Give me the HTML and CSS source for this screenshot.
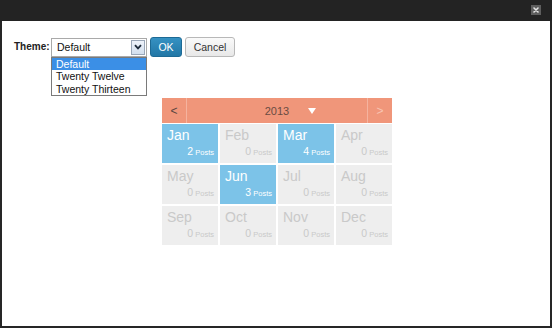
FILE: index.html
```html
<!DOCTYPE html>
<html>
<head>
<meta charset="utf-8">
<link rel="stylesheet" href="styles.css">
</head>
<body>
<div class="window">
  <div class="titlebar">
    <span class="close">
      <svg width="10" height="10" viewBox="0 0 10 10"><rect width="10" height="10" fill="#5e5e5e"/><path d="M3 3L7 7M7 3L3 7" stroke="#e6e6e6" stroke-width="1.6" stroke-linecap="round"/></svg>
    </span>
  </div>
  <div class="content">
    <div class="theme-row">
      <label class="theme-label">Theme:</label>
      <div class="select-wrap">
        <div class="select">
          <span class="select-value">Default</span>
          <span class="select-arrow">
            <svg width="8" height="6" viewBox="0 0 8 6"><path d="M1 1.2L4 4.4L7 1.2" fill="none" stroke="#1d2a3a" stroke-width="1.8"/></svg>
          </span>
        </div>
        <ul class="dropdown">
          <li class="option selected">Default</li>
          <li class="option">Twenty Twelve</li>
          <li class="option">Twenty Thirteen</li>
        </ul>
      </div>
      <button class="btn btn-ok">OK</button>
      <button class="btn btn-cancel">Cancel</button>
    </div>

    <div class="calendar">
      <div class="cal-header">
        <span class="cal-nav cal-prev">&lt;</span>
        <span class="cal-year">2013<span class="cal-caret"></span></span>
        <span class="cal-nav cal-next">&gt;</span>
      </div>
      <div class="cal-grid">
        <div class="cell active"><span class="m">Jan</span><span class="p"><b>2</b> Posts</span></div>
        <div class="cell"><span class="m">Feb</span><span class="p"><b>0</b> Posts</span></div>
        <div class="cell active"><span class="m">Mar</span><span class="p"><b>4</b> Posts</span></div>
        <div class="cell"><span class="m">Apr</span><span class="p"><b>0</b> Posts</span></div>
        <div class="cell"><span class="m">May</span><span class="p"><b>0</b> Posts</span></div>
        <div class="cell active"><span class="m">Jun</span><span class="p"><b>3</b> Posts</span></div>
        <div class="cell"><span class="m">Jul</span><span class="p"><b>0</b> Posts</span></div>
        <div class="cell"><span class="m">Aug</span><span class="p"><b>0</b> Posts</span></div>
        <div class="cell"><span class="m">Sep</span><span class="p"><b>0</b> Posts</span></div>
        <div class="cell"><span class="m">Oct</span><span class="p"><b>0</b> Posts</span></div>
        <div class="cell"><span class="m">Nov</span><span class="p"><b>0</b> Posts</span></div>
        <div class="cell"><span class="m">Dec</span><span class="p"><b>0</b> Posts</span></div>
      </div>
    </div>
  </div>
</div>
</body>
</html>
```

FILE: styles.css
```css
html, body {
  margin: 0;
  padding: 0;
  background: #fff;
}
body {
  font-family: "Liberation Sans", Arial, sans-serif;
}
.window {
  width: 552px;
  height: 328px;
  box-sizing: border-box;
  border: 2px solid #262626;
  border-top: 0;
  display: flex;
  flex-direction: column;
  background: #fff;
}
.titlebar {
  height: 21px;
  margin: 0 -2px;
  background: #232323;
  display: flex;
  justify-content: flex-end;
  align-items: flex-start;
  padding: 5px 11px 0 0;
  box-sizing: border-box;
}
.close {
  display: block;
  width: 10px;
  height: 10px;
}
.close svg { display: block; }

.content {
  flex: 1;
  padding: 16px 0 0 12px;
}
.theme-row {
  display: flex;
  align-items: center;
  height: 20px;
}
.theme-label {
  width: 37px;
  font-size: 10px;
  font-weight: bold;
  color: #222;
  line-height: 12px;
}
.select-wrap {
  position: relative;
  width: 96px;
  height: 19px;
}
.select {
  box-sizing: border-box;
  height: 19px;
  border: 1px solid #a9a9a9;
  background: #fff;
  display: flex;
  align-items: center;
  justify-content: space-between;
  padding: 0 1px 0 5px;
}
.select-value {
  font-size: 10.5px;
  color: #111;
}
.select-arrow {
  width: 14px;
  height: 15px;
  box-sizing: border-box;
  border: 1px solid #9aa7b8;
  background: linear-gradient(#eef3fa, #d3dfee);
  display: flex;
  align-items: center;
  justify-content: center;
}
.select-arrow svg { display: block; }
.dropdown {
  position: absolute;
  left: 0;
  top: 19px;
  width: 96px;
  box-sizing: border-box;
  margin: 0;
  padding: 0;
  list-style: none;
  border: 1px solid #7a7a7a;
  background: #fff;
  z-index: 2;
}
.option {
  font-size: 10.5px;
  line-height: 12.5px;
  height: 12.5px;
  padding-left: 4px;
  color: #111;
}
.option.selected {
  background: #3b8fe6;
  color: #fff;
}
.btn {
  box-sizing: border-box;
  height: 20px;
  border-radius: 3px;
  font-family: "Liberation Sans", Arial, sans-serif;
  font-size: 10.5px;
  padding: 0;
  margin-left: 3px;
}
.btn-ok {
  width: 32px;
  margin-left: 3px;
  background: linear-gradient(#3591c2, #2277a6);
  border: 1px solid #1d6a95;
  color: #fff;
}
.btn-cancel {
  width: 50px;
  background: linear-gradient(#fafafa, #e8e8e8);
  border: 1px solid #b8b8b8;
  color: #333;
}

.calendar {
  width: 230px;
  margin: 41px auto 0;
  position: relative;
  left: -5px;
}
.cal-header {
  height: 25px;
  background: #f0967a;
  display: flex;
  align-items: stretch;
}
.cal-nav {
  width: 24px;
  display: flex;
  align-items: center;
  justify-content: center;
  font-size: 12px;
}
.cal-prev {
  color: #5a4640;
  border-right: 1px solid #f5b39f;
}
.cal-next {
  color: #f8c4b2;
  border-left: 1px solid #f5b39f;
}
.cal-year {
  flex: 1;
  position: relative;
  display: flex;
  align-items: center;
  justify-content: center;
  font-size: 11px;
  color: #6a4c42;
}
.cal-caret {
  position: absolute;
  left: 50%;
  top: 10px;
  margin-left: 31px;
  width: 0;
  height: 0;
  border-left: 4px solid transparent;
  border-right: 4px solid transparent;
  border-top: 6px solid #fff;
}
.cal-grid {
  margin-top: 1px;
  display: grid;
  grid-template-columns: repeat(4, 56px);
  grid-auto-rows: 39px;
  column-gap: 2px;
  row-gap: 2px;
}
.cell {
  background: #eeeeee;
  color: #c9c9c9;
  display: flex;
  flex-direction: column;
  justify-content: space-between;
  padding: 3px 4px 5px 5px;
  box-sizing: border-box;
}
.cell.active {
  background: #7cc3e8;
  color: #fff;
}
.m {
  font-size: 14px;
  line-height: 16px;
}
.p {
  text-align: right;
  font-size: 7.5px;
  line-height: 11px;
}
.p b {
  font-weight: normal;
  font-size: 10.5px;
}
```
